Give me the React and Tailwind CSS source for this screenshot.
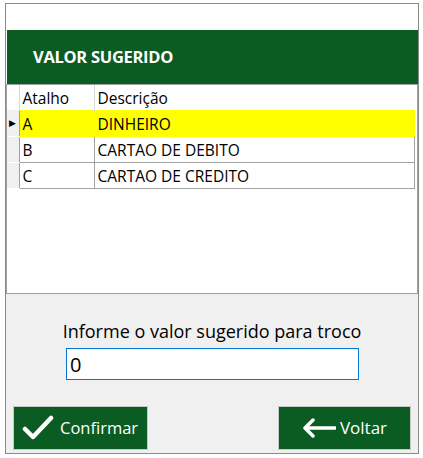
import React, { useState } from "react";

const rows = [
    { key: "A", desc: "DINHEIRO" },
    { key: "B", desc: "CARTAO DE DEBITO" },
    { key: "C", desc: "CARTAO DE CREDITO" },
];

const CheckIcon = () => (
    <svg width="32" height="26" viewBox="0 0 32 26" className="shrink-0">
        <path d="M3 14 L11 22 L29 3" fill="none" stroke="white" strokeWidth="4.5" strokeLinecap="round" strokeLinejoin="round" />
    </svg>
);

const ArrowIcon = () => (
    <svg width="34" height="20" viewBox="0 0 34 20" className="shrink-0">
        <path d="M33 10 H4 M11 2 L3 10 L11 18" fill="none" stroke="white" strokeWidth="3.5" strokeLinecap="round" strokeLinejoin="round" />
    </svg>
);

const App = () => {
    const [valor, setValor] = useState("0");
    const [selected, setSelected] = useState(0);

    return (
        <div className="w-[423px] h-[458px] bg-white pt-[3px] pl-[5px] font-['Open_Sans',sans-serif]">
            <div className="w-[414px] h-[451px] border border-[#8a8a8a] flex flex-col">
                {/* Title */}
                <div className="h-[26px] bg-white" />
                <div className="h-[54px] ml-[1px] bg-[#0a5c22] flex items-center pl-[26px]">
                    <span className="text-white font-bold text-[16.5px] tracking-[-0.3px]">VALOR SUGERIDO</span>
                </div>

                {/* Grid */}
                <div className="h-[210px] border border-[#a0a0a0] bg-white">
                    <table className="border-collapse text-[15.5px] leading-[20px] text-black">
                        <thead>
                            <tr className="h-[25px]">
                                <th className="w-[12px] border-r border-[#d8d8d8]" />
                                <th className="w-[75px] border-r border-[#d8d8d8] text-left font-normal pl-[3px] pt-[2px]">Atalho</th>
                                <th className="w-[320px] text-left font-normal pl-[3px] pt-[2px]">Descrição</th>
                            </tr>
                        </thead>
                        <tbody>
                            {rows.map((row, i) => (
                                <tr key={row.key} className="h-[26px] cursor-default" onClick={() => setSelected(i)}>
                                    <td className="bg-[#f0f0f0] border-b border-white border-r border-r-[#a0a0a0] text-[9px] leading-none p-0 text-center">
                                        {selected === i ? "▶" : ""}
                                    </td>
                                    <td className={`border border-[#a0a0a0] pl-[3px] pt-[2px] ${selected === i ? "bg-[#ffff00] border-[#ffff00] border-l-[#a0a0a0]" : ""}`}>
                                        {row.key}
                                    </td>
                                    <td className={`border border-[#a0a0a0] pl-[3px] pt-[2px] ${selected === i ? "bg-[#ffff00] border-[#ffff00]" : ""}`}>
                                        {row.desc}
                                    </td>
                                </tr>
                            ))}
                        </tbody>
                    </table>
                </div>

                {/* Bottom */}
                <div className="flex-1 bg-[#f0f0f0] flex flex-col">
                    <div className="mt-[25px] text-center text-[18px] text-black leading-[24px]">
                        Informe o valor sugerido para troco
                    </div>
                    <input
                        value={valor}
                        onChange={(e) => setValor(e.target.value)}
                        className="mt-[5px] ml-[60px] w-[293px] h-[32px] border border-[#0078d7] bg-white px-[3px] text-[20px] text-black outline-none"
                    />
                    <div className="mt-auto mb-[3px] flex justify-between px-[7px]">
                        <button className="w-[135px] h-[44px] bg-[#0a5c22] border border-[#c8c8c8] flex items-center gap-[6px] pl-[8px] text-white text-[16.5px]">
                            <CheckIcon />
                            Confirmar
                        </button>
                        <button className="w-[133px] h-[44px] bg-[#0a5c22] border border-[#c8c8c8] flex items-center justify-center gap-[4px] text-white text-[17px]">
                            <ArrowIcon />
                            Voltar
                        </button>
                    </div>
                </div>
            </div>
        </div>
    );
};

export default App;
